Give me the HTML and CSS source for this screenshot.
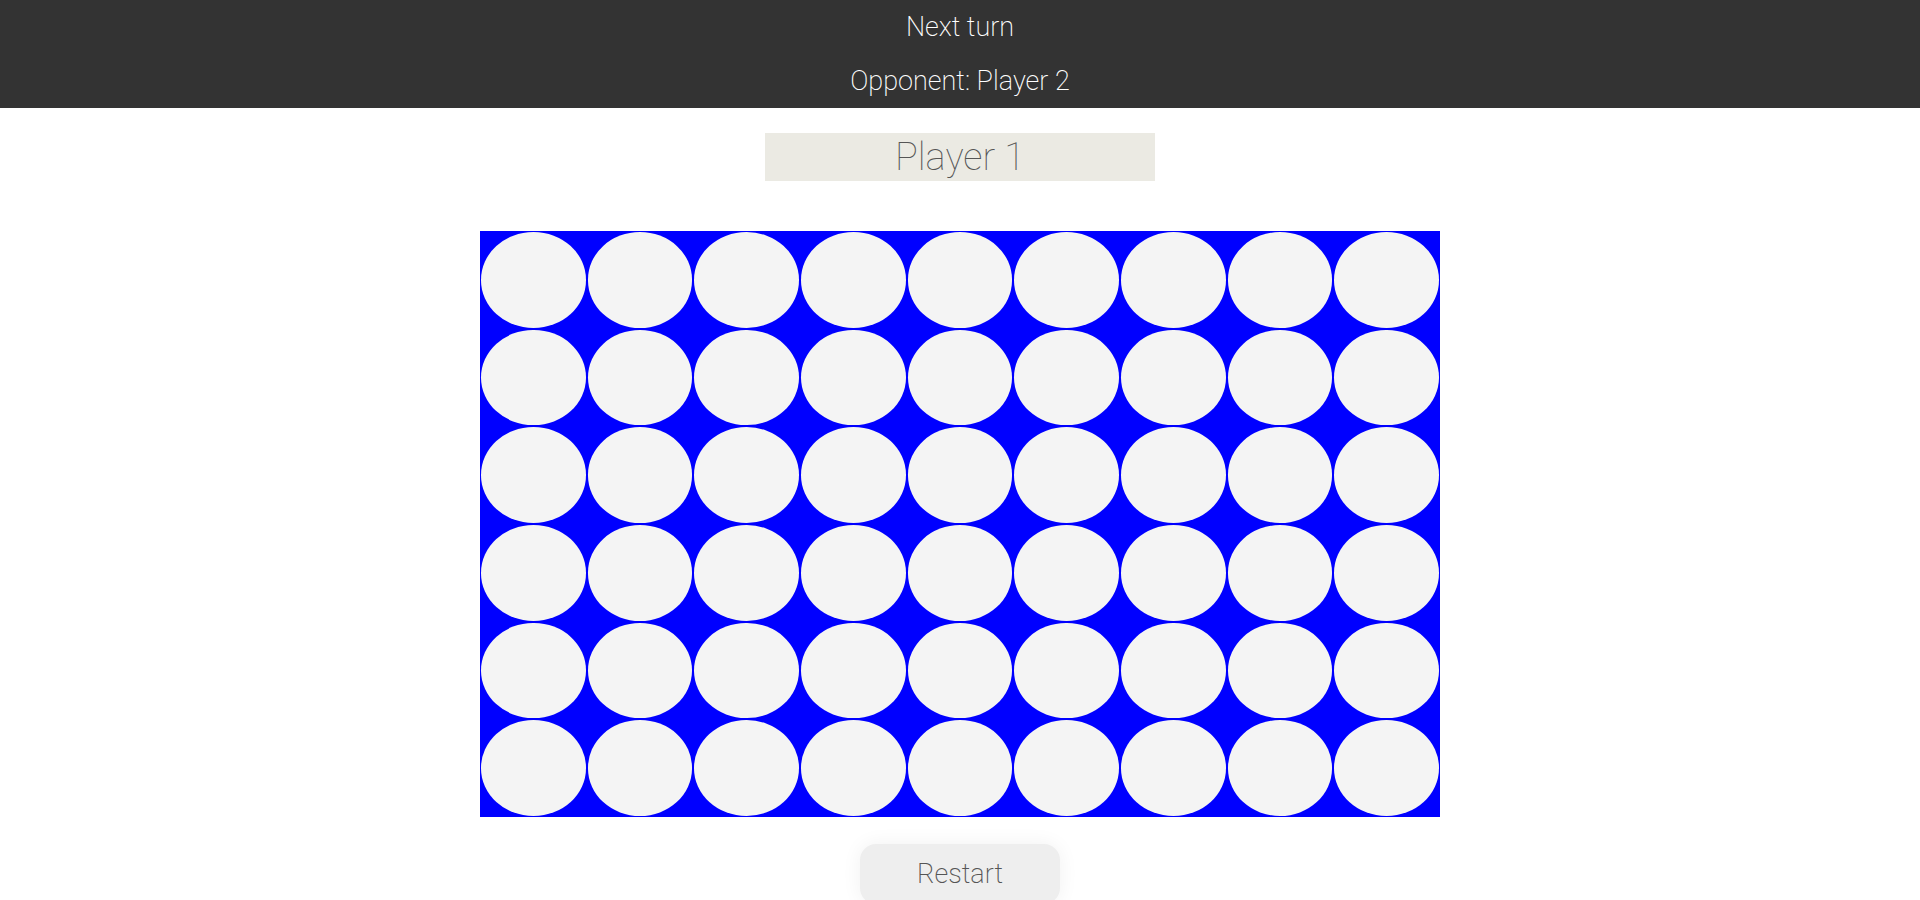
FILE: index.html
```html
<!DOCTYPE html>
<html>
<head>
<meta charset="utf-8">
<link rel="stylesheet" href="styles.css">
</head>
<body>
<header class="top">
  <div class="line">Next turn</div>
  <div class="line">Opponent: Player 2</div>
</header>
<main class="game">
  <div class="player">Player 1</div>
  <div class="board" id="board"></div>
  <button class="restart">Restart</button>
</main>
<script>
  var b = document.getElementById('board');
  for (var i = 0; i < 54; i++) {
    var c = document.createElement('div');
    c.className = 'hole';
    b.appendChild(c);
  }
</script>
</body>
</html>
```
FILE: styles.css
```css
html, body {
  margin: 0;
  padding: 0;
  background: #ffffff;
  font-family: Roboto, "Liberation Sans", sans-serif;
}
.top {
  background: #333333;
  color: #ffffff;
  height: 108px;
  text-align: center;
}
.line {
  height: 54px;
  line-height: 54px;
  font-size: 27px;
  font-weight: 200;
}
.game {
  display: flex;
  flex-direction: column;
  align-items: center;
}
.player {
  margin-top: 25px;
  width: 390px;
  height: 48px;
  line-height: 48px;
  background: #ebeae3;
  color: #555555;
  text-align: center;
  font-size: 38px;
  font-weight: 100;
}
.board {
  margin-top: 50px;
  width: 960px;
  height: 586px;
  box-sizing: border-box;
  padding: 1px;
  background: #0000ff;
  display: grid;
  grid-template-columns: repeat(9, 1fr);
  grid-template-rows: repeat(6, 1fr);
  gap: 2px;
}
.hole {
  background: #f4f4f4;
  border-radius: 50%;
}
.restart {
  margin-top: 27px;
  width: 200px;
  height: 60px;
  border: none;
  border-radius: 16px;
  background: #eeeeee;
  color: #555555;
  font-family: Roboto, "Liberation Sans", sans-serif;
  font-size: 27px;
  font-weight: 200;
  box-shadow: 0 0 20px rgba(0, 0, 0, 0.06);
}
```
